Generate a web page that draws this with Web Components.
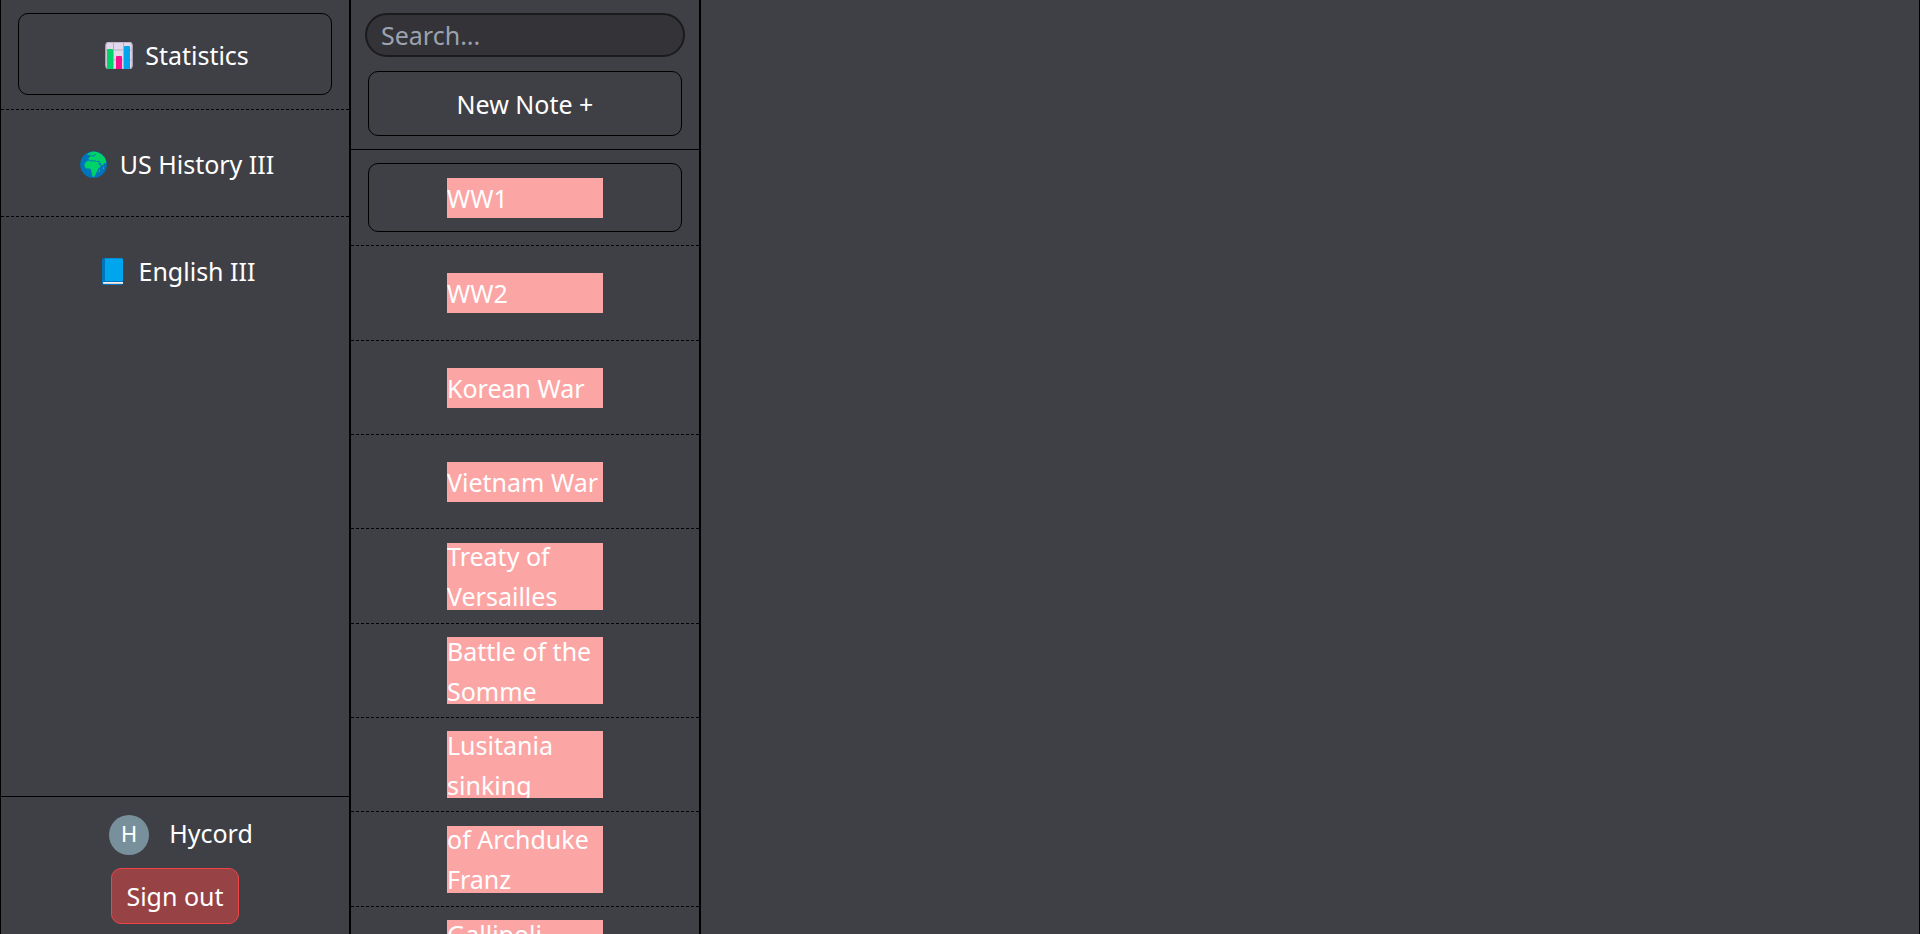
<!DOCTYPE html>
<html lang="en">
<head>
<meta charset="utf-8">
<title>Notes</title>
<style>
html, body { margin: 0; height: 100%; }
body {
  --surface: #3f4045;
  --line: #000;
  background: var(--surface);
  color: #fff;
  font: 25px/40px "Noto Sans", "Open Sans", sans-serif;
  overflow: hidden;
}
</style>
</head>
<body>
<notes-app>
  <side-nav slot="nav">
    <nav-item selected>
      <svg slot="icon" viewBox="0 0 36 36" width="36" height="36" aria-hidden="true">
        <rect x="4.500" y="5" width="27" height="27" rx="3" fill="#e2d8ec"/>
        <path d="M12.500 5v27M22.500 5v27M4.500 13h27M4.500 23h27" stroke="#b5a9c0" stroke-width="1" fill="none"/>
        <rect x="5" y="5.500" width="26" height="26" rx="3" fill="none" stroke="#bfb4ca"/>
        <path d="M6 13a1 1 0 0 1 1-1h4a1 1 0 0 1 1 1v19H7a1 1 0 0 1-1-1z" fill="#00d26a"/>
        <path d="M15 20a1 1 0 0 1 1-1h4a1 1 0 0 1 1 1v12h-6z" fill="#f8118b"/>
        <path d="M23 10a1 1 0 0 1 1-1h4a1 1 0 0 1 1 1v22h-6z" fill="#00a6ed"/>
      </svg>
      Statistics
    </nav-item>
    <nav-item>
      <svg slot="icon" viewBox="0 0 36 36" width="36" height="36" aria-hidden="true">
        <circle cx="17.500" cy="18.500" r="13.300" fill="#0074ba"/>
        <path d="M11 8.500l3-2 3.500-.9 4 .6 4 2 3.400 3.800 1.400 4-.4 1.500-1.600-.8-.8 1.800-1.400 1.300-1.300-2.600-1.800-.7-.9 1.200 1.300 1.200 1.500.2-.8 2-2.300 1.800-.6 2.400-1.200 1.800-.6 2-1.600 1.800-1.300-.5-.8-2.800-.4-3-1.400-2-3.500-.2-2-2 .4-3 2.200-2.400 2-.2.2-1.400-1.200-.6 1.400-1.200 1-1.600z" fill="#00d26a"/>
        <path d="M13.500 14.300l2.500.9 2.500-.6 2 .9h3.500M12 10l2.500-1 1.500 1.300 2.500-.6 1-1.700" fill="none" stroke="#0074ba"/>
        <path d="M22.800 24.200l.8-1 .2 2-.9 1.600zM27 20.500l1 1.500.1 1.500-1-.8z" fill="#00d26a"/>
      </svg>
      US History III
    </nav-item>
    <nav-item>
      <svg slot="icon" viewBox="0 0 36 36" width="36" height="36" aria-hidden="true">
        <rect x="7" y="5" width="21" height="27" rx="2" fill="#0074ba"/>
        <path d="M10 5.500h17a1 1 0 0 1 1 1V28H10z" fill="#00a6ed"/>
        <path d="M8 29h20v2H8.500a1 1 0 0 1-.5-1z" fill="#d3d3d3"/>
        <path d="M8.500 29.500H28" stroke="#f3eef8"/>
      </svg>
      English III
    </nav-item>
    <user-card slot="footer" initial="H">Hycord</user-card>
  </side-nav>
  <note-list slot="list">
    <note-item selected>WW1</note-item>
    <note-item>WW2</note-item>
    <note-item>Korean War</note-item>
    <note-item>Vietnam War</note-item>
    <note-item>Treaty of Versailles</note-item>
    <note-item>Battle of the Somme</note-item>
    <note-item>Lusitania sinking</note-item>
    <note-item>of Archduke Franz</note-item>
    <note-item>Gallipoli Campaign</note-item>
  </note-list>
</notes-app>
<script>
const define = (name, html, setup) => {
  const template = document.createElement('template');
  template.innerHTML = html;
  customElements.define(name, class extends HTMLElement {
    constructor() {
      super();
      this.attachShadow({ mode: 'open' }).append(template.content.cloneNode(true));
    }
    connectedCallback() { if (setup) setup(this, this.shadowRoot); }
  });
};

define('notes-app', `
<style>
  :host { display: grid; grid-template-columns: 35fr 35fr 122fr; height: 100vh; }
  nav, section, main {
    min-width: 0; min-height: 0; box-sizing: border-box;
    border: solid var(--line); border-width: 0 1px;
  }
</style>
<nav aria-label="Classes"><slot name="nav"></slot></nav>
<section aria-label="Notes"><slot name="list"></slot></section>
<main aria-label="Editor"></main>`);

define('side-nav', `
<style>
  :host { display: flex; flex-direction: column; height: 100%; }
  .items { flex: 1; min-height: 0; overflow: hidden; }
  ::slotted(nav-item:not(:last-of-type)) { border-bottom: 1px dashed var(--line); }
  footer { border-top: 1px solid var(--line); }
</style>
<div class="items"><slot></slot></div>
<footer><slot name="footer"></slot></footer>`);

define('nav-item', `
<style>
  :host { display: block; padding: 13px 17px; }
  :host([selected]) { padding-bottom: 14px; }
  button {
    display: flex; align-items: center; justify-content: center; gap: 8px;
    width: 100%; padding: 21px 0 19px; border: 0; border-radius: 10px;
    background: none; color: inherit; font: inherit;
  }
  :host([selected]) button { border: 1px solid var(--line); }
  ::slotted(svg) { display: block; }
</style>
<button type="button"><slot name="icon"></slot><span><slot></slot></span></button>`);

define('user-card', `
<style>
  :host { display: flex; flex-direction: column; align-items: center; padding: 16px 0 10px; }
  .who { display: flex; gap: 20px; padding-left: 12px; margin-bottom: 13px; }
  .avatar {
    width: 40px; height: 40px; margin-top: 2px; border-radius: 50%;
    background: #78909c; text-align: center;
    font: 22px/40px Roboto, sans-serif;
  }
  button {
    padding: 7px 14px; border: 1px solid #ef4444; border-radius: 10px;
    background: rgba(239, 68, 68, .5); color: inherit; font: inherit;
  }
</style>
<div class="who"><span class="avatar"></span><span><slot></slot></span></div>
<button type="button">Sign out</button>`,
(host, root) => { root.querySelector('.avatar').textContent = host.getAttribute('initial'); });

define('note-list', `
<style>
  :host { display: flex; flex-direction: column; height: 100%; }
  header { padding: 13px 14px; border-bottom: 1px solid var(--line); }
  input {
    display: block; box-sizing: border-box; width: 100%; height: 44px;
    padding: 0 14px; margin: 0 0 14px; border: 2px solid #1b1a1d; border-radius: 22px;
    background: #343338; color: inherit; font: inherit; outline: none;
  }
  input::placeholder { color: #9ca3af; opacity: 1; }
  .add {
    display: block; height: 65px; padding: 0; width: calc(100% - 6px); margin: 0 3px;
    border: 1px solid var(--line); border-radius: 10px;
    background: none; color: inherit; font: inherit;
  }
  .notes { flex: 1; min-height: 0; overflow: hidden; }
  ::slotted(note-item) { height: 94px; }
  ::slotted(note-item:nth-child(3n+2)) { height: 95px; }
  ::slotted(note-item[selected]) { height: 96px; }
</style>
<header>
  <input type="search" placeholder="Search..." aria-label="Search notes">
  <button class="add" type="button">New Note +</button>
</header>
<div class="notes"><slot></slot></div>`);

define('note-item', `
<style>
  :host {
    display: block; box-sizing: border-box; padding: 13px 17px;
    border-bottom: 1px dashed var(--line);
  }
  button {
    display: flex; align-items: center; justify-content: center;
    box-sizing: border-box; width: 100%; height: 100%; padding: 0 1px;
    border: 0; border-radius: 10px; background: none; color: inherit; font: inherit;
  }
  :host([selected]) button { border: 1px solid var(--line); padding: 0; }
  .title {
    display: flex; align-items: center; width: 50%; max-height: 67px;
    overflow: hidden; background: #fca5a5; text-align: left;
  }
</style>
<button type="button"><span class="title"><span><slot></slot></span></span></button>`);
</script>
</body>
</html>
